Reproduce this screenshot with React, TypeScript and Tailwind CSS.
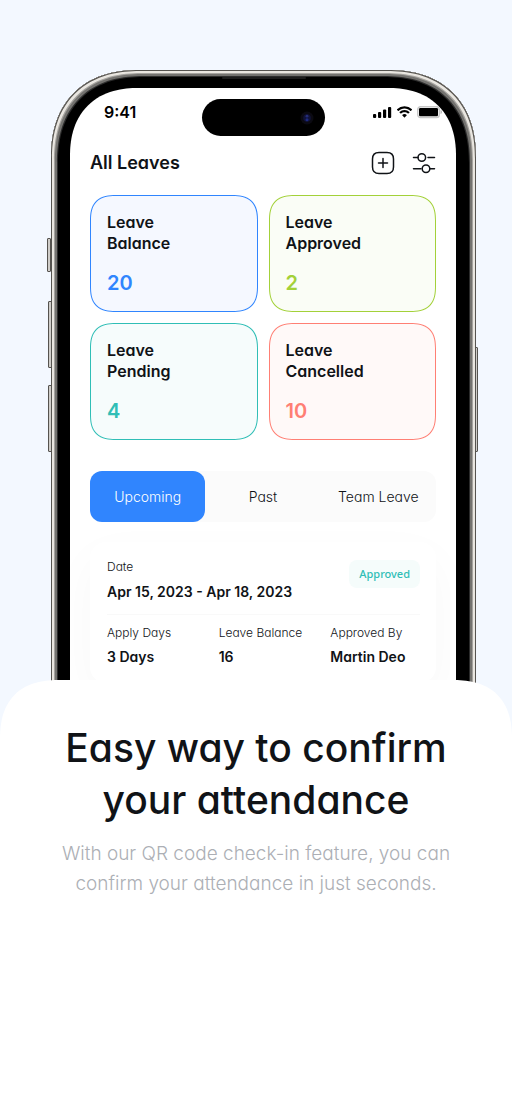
import { useState } from "react";

type Stat = { top: string; bottom: string; value: number; box: string; text: string };

const stats: Stat[] = [
  { top: "Leave", bottom: "Balance", value: 20, box: "border-[#3085fe] bg-[#f5f8ff]", text: "text-[#3085fe]" },
  { top: "Leave", bottom: "Approved", value: 2, box: "border-[#a3d139] bg-[#fafdf6]", text: "text-[#a3d139]" },
  { top: "Leave", bottom: "Pending", value: 4, box: "border-[#30beb6] bg-[#f6fcfc]", text: "text-[#30beb6]" },
  { top: "Leave", bottom: "Cancelled", value: 10, box: "border-[#ff7f74] bg-[#fff9f8]", text: "text-[#ff7f74]" },
];

const tabs = ["Upcoming", "Past", "Team Leave"];

const details = [
  { label: "Apply Days", value: "3 Days" },
  { label: "Leave Balance", value: "16" },
  { label: "Approved By", value: "Martin Deo" },
];

function StatusBar() {
  return (
    <div className="grid grid-cols-[1fr_123px_1fr] pt-[11px]">
      <span className="self-start pt-[3px] pl-[34px] text-base leading-5 font-semibold text-black">9:41</span>
      <div className="flex h-[37px] items-center justify-end rounded-full bg-black pr-[11px]">
        <svg width="14" height="14" viewBox="0 0 14 14" aria-hidden="true">
          <circle cx="7" cy="7" r="6.5" fill="#0b0a12" />
          <circle cx="7" cy="7" r="3.8" fill="#10123a" />
          <circle cx="7" cy="5.2" r="1.4" fill="#252d78" />
          <circle cx="7" cy="8.8" r="1.5" fill="#1d2a80" />
        </svg>
      </div>
      <div className="flex items-start justify-end gap-1 pt-[7px] pr-[14px]">
        <svg width="19" height="12" viewBox="0 0 19 12" aria-hidden="true">
          <rect x="0" y="8" width="3.2" height="4" rx="1" />
          <rect x="5" y="6" width="3.2" height="6" rx="1" />
          <rect x="10" y="3.5" width="3.2" height="8.5" rx="1" />
          <rect x="15" y="1" width="3.2" height="11" rx="1" />
        </svg>
        <svg width="17" height="12" viewBox="0 0 17 12" aria-hidden="true">
          <path d="M8.5 2.6c2.3 0 4.4.9 6 2.4.1.1.3.1.4 0L16 3.8c.1-.1.1-.3 0-.5a10.9 10.9 0 0 0-15 0c-.1.2-.1.4 0 .5L2.1 5c.1.1.3.1.4 0 1.6-1.5 3.7-2.4 6-2.4Zm0 3.7c1.3 0 2.5.5 3.4 1.3.1.1.3.1.4 0l1.2-1.2c.1-.1.1-.3 0-.5a7.3 7.3 0 0 0-10 0c-.1.2-.1.4 0 .5l1.2 1.2c.1.1.3.1.4 0 .9-.8 2.1-1.300 3.400-1.300Zm2.300 2.600c.1.1.1.3 0 .4l-2.100 2.100c-.1.1-.3.1-.4 0L6.200 9.300c-.1-.1-.1-.3 0-.4a3.600 3.600 0 0 1 4.600 0Z" />
        </svg>
        <svg width="25" height="13" viewBox="0 0 25 13" aria-hidden="true">
          <rect x="0.7" y="0.7" width="21.6" height="10.8" rx="2.8" fill="none" stroke="#c8c8c8" strokeWidth="1.4" />
          <path d="M23.5 4c1 .4 1.500 1.100 1.500 2s-.5 1.700-1.500 2.100Z" fill="#b8b8b8" />
          <rect x="2" y="2" width="19" height="8.2" rx="1.3" />
        </svg>
      </div>
    </div>
  );
}

function AddIcon() {
  return (
    <svg width="24" height="24" viewBox="0 0 24 24" fill="none" stroke="#101317" strokeWidth="1.5" strokeLinecap="round" aria-hidden="true">
      <path d="M8 1.500h8c4.700 0 6.500 1.800 6.500 6.500v8c0 4.700-1.800 6.500-6.500 6.500H8c-4.700 0-6.500-1.800-6.500-6.500V8C1.500 3.300 3.300 1.500 8 1.500Z" />
      <path d="M12 7.500v9M7.500 12h9" />
    </svg>
  );
}

function FilterIcon() {
  return (
    <svg width="24" height="24" viewBox="0 0 24 24" fill="none" stroke="#101317" strokeWidth="1.5" strokeLinecap="round" aria-hidden="true">
      <path d="M1.500 6.500h4.500M16 6.500h6.500M1.500 17.700h7.500M18 17.700h4.500" />
      <circle cx="9.800" cy="6.500" r="3.800" />
      <circle cx="14" cy="17.700" r="3.800" />
    </svg>
  );
}

function SideButton({ className }: { className: string }) {
  return (
    <span
      aria-hidden="true"
      className={`absolute w-1 rounded-[1px] border border-[#55534f] bg-[#cfcdc9] ${className}`}
    />
  );
}

function StatCard({ stat }: { stat: Stat }) {
  return (
    <article className={`rounded-[26px] border px-4 pt-4 pb-[15px] [corner-shape:superellipse(1.4)] ${stat.box}`}>
      <h2 className="text-base leading-[21px] font-semibold">
        {stat.top}
        <br />
        {stat.bottom}
      </h2>
      <p className={`mt-[17px] text-xl leading-[25px] font-semibold ${stat.text}`}>{stat.value}</p>
    </article>
  );
}

export default function App() {
  const [active, setActive] = useState(tabs[0]);

  return (
    <div className="flex min-h-screen flex-col bg-[#f3f8ff] font-['Inter',sans-serif] text-[#101317] [font-feature-settings:'cv11']">
      <div className="pt-[70px] pr-9 pl-[51px]">
        <div className="relative">
          <SideButton className="top-[168px] -left-1 h-[34px]" />
          <SideButton className="top-[231px] -left-[3px] h-[67px]" />
          <SideButton className="top-[315px] -left-[3px] h-[67px]" />
          <SideButton className="top-[277px] -right-[2px] h-[105px]" />
          <div className="relative rounded-t-[88px] bg-black pt-[18px] pr-5 pl-[19px] shadow-[inset_0_0_0_1px_#55534f,inset_0_0_0_3px_#e9e6e0,inset_0_0_0_4px_#a5a39f,inset_0_0_0_6px_#73726f,inset_0_0_0_7px_#2b2b2b] [corner-shape:superellipse(1.2)]">
            <span aria-hidden="true" className="absolute top-[7px] left-1/2 h-[2px] w-[84px] -translate-x-1/2 rounded-full bg-[#1c1c1c]" />
            <div className="overflow-hidden rounded-t-[68px] bg-white pb-[77px] [corner-shape:superellipse(1.2)]">
              <StatusBar />
              <div className="px-5">
                <header className="mt-[15px] flex items-center justify-between">
                  <h1 className="text-lg leading-6 font-semibold">All Leaves</h1>
                  <div className="flex gap-[17px]">
                    <button type="button" aria-label="Add leave">
                      <AddIcon />
                    </button>
                    <button type="button" aria-label="Filter leaves">
                      <FilterIcon />
                    </button>
                  </div>
                </header>

                <section className="mt-5 grid grid-cols-2 gap-[11px]">
                  {stats.map((stat) => (
                    <StatCard key={stat.bottom} stat={stat} />
                  ))}
                </section>

                <div role="tablist" className="mt-[31px] grid grid-cols-3 rounded-xl bg-[#fbfbfb]">
                  {tabs.map((tab) => (
                    <button
                      key={tab}
                      type="button"
                      role="tab"
                      aria-selected={active === tab}
                      onClick={() => setActive(tab)}
                      className={`h-[51px] rounded-xl text-sm font-light whitespace-nowrap ${
                        active === tab ? "bg-[#3085fe] text-white" : "text-[#101317]"
                      }`}
                    >
                      {tab}
                    </button>
                  ))}
                </div>

                <article className="mt-5 rounded-2xl bg-white py-4 pr-4 pl-[17px] shadow-[0_16px_48px_rgba(0,0,0,0.03)]">
                  <div className="flex items-start justify-between border-b border-[#f9f9f9] pb-3">
                    <div>
                      <p className="text-xs leading-[18px] font-light">Date</p>
                      <p className="mt-[6px] text-sm leading-5 font-semibold">Apr 15, 2023 - Apr 18, 2023</p>
                    </div>
                    <span className="mt-[2px] rounded-lg bg-[#f5fcfb] px-[10px] py-[5px] font-['Noto_Sans',sans-serif] text-[11px] leading-[18px] font-medium text-[#30beb6]">
                      Approved
                    </span>
                  </div>
                  <dl className="mt-[9px] grid grid-cols-3 gap-[22px]">
                    {details.map((item) => (
                      <div key={item.label} className="whitespace-nowrap">
                        <dt className="text-xs leading-[18px] font-light">{item.label}</dt>
                        <dd className="mt-[5px] text-sm leading-5 font-semibold">{item.value}</dd>
                      </div>
                    ))}
                  </dl>
                </article>
              </div>
            </div>
          </div>
        </div>
      </div>

      <section className="relative -mt-20 flex-1 rounded-t-[60px] bg-white px-8 pt-[42px] pb-10 text-center [corner-shape:superellipse(1.3)]">
        <h2 className="text-[39px] leading-[52px] font-medium">
          Easy way to confirm
          <br />
          your attendance
        </h2>
        <p className="mt-[13px] text-[19px] leading-[30px] font-light text-[#acafb5]">
          With our QR code check-in feature, you can
          <br />
          confirm your attendance in just seconds.
        </p>
      </section>
    </div>
  );
}
